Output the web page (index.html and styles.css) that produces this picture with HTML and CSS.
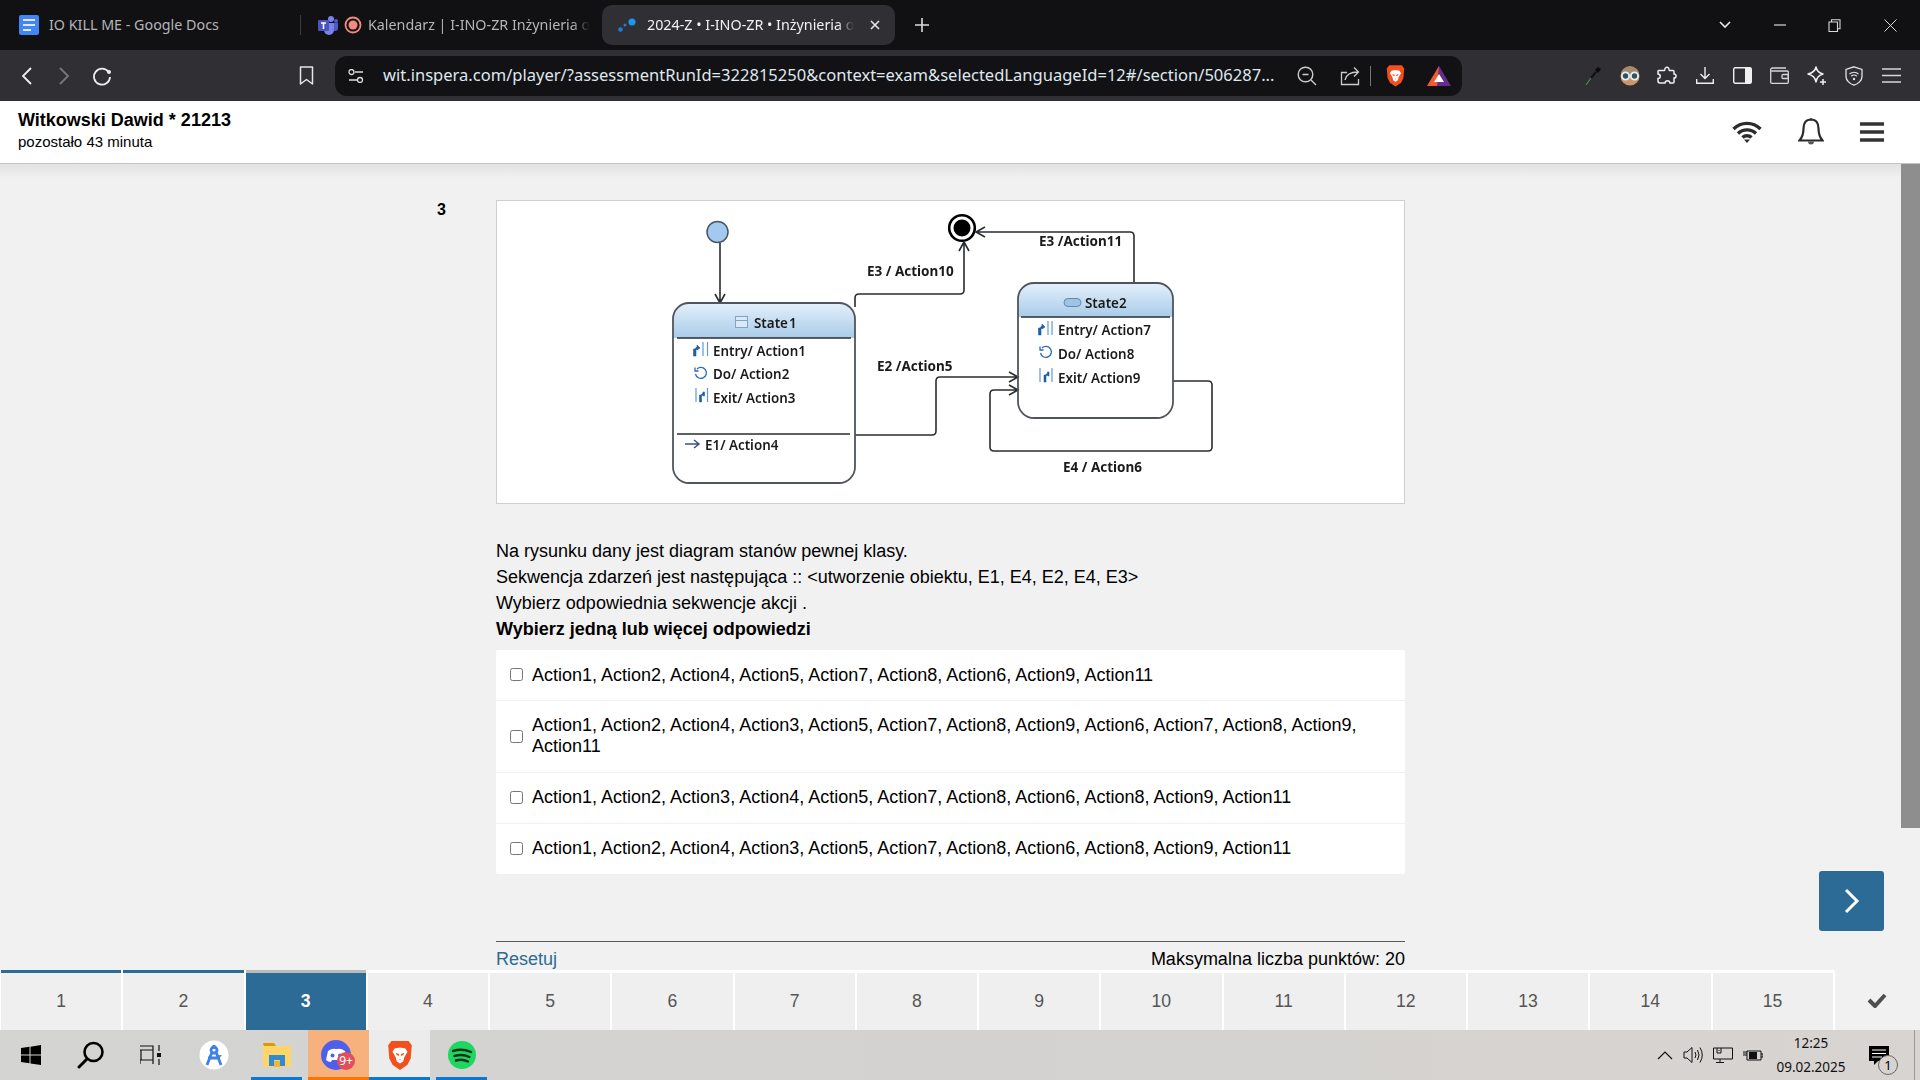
FILE: index.html
```html
<!DOCTYPE html>
<html lang="pl">

<head>
  <meta charset="UTF-8">
  <title>2024-Z • I-INO-ZR • Inżynieria</title>
  <link rel="stylesheet" href="styles.css">
</head>

<body>
  <svg class="defs" width="0" height="0">
    <symbol id="brave" viewBox="0 0 24 28">
      <path fill="#f1501f" d="M4 1h16l3 4-1 12-3 6-7 5-7-5-3-6L1 5z"/>
      <path fill="#fff" d="M7 8l5-1 5 1 2 3-3 5-1 4-3 2-3-2-1-4-3-5z"/>
      <path fill="#f1501f" d="M8 12l3 1v2l-2-1zM16 12l-3 1v2l2-1zM11 18h2l-1 1z"/>
    </symbol>
  </svg>

  <div class="tabbar">
    <div class="tab tab-docs">
      <svg class="tab-ico" width="20" height="20" viewBox="0 0 20 20"><rect width="20" height="20" rx="2" fill="#4285f4"/><path d="M4 5h12M4 10h12M4 15h8" stroke="#dbe8ff" stroke-width="2"/></svg>
      <span class="tab-title">IO KILL ME - Google Docs</span>
    </div>
    <div class="tab-sep"></div>
    <div class="tab tab-cal">
      <svg class="tab-ico" width="20" height="20" viewBox="0 0 20 20"><circle cx="13" cy="4" r="3" fill="#7b83eb"/><circle cx="18" cy="6" r="2" fill="#5059c9"/><path d="M15 8h5v6a3 3 0 0 1-5 1z" fill="#5059c9"/><path d="M6 8h10v7a5 5 0 0 1-10 0z" fill="#7b83eb"/><rect y="5" width="11" height="11" rx="1" fill="#4b53bc"/><path d="M3 8h5M5.500 8v6" stroke="#fff" stroke-width="1.500"/></svg>
      <svg class="tab-ico" width="18" height="18" viewBox="0 0 18 18"><circle cx="9" cy="9" r="7.500" fill="none" stroke="#f28b82" stroke-width="1.800"/><circle cx="9" cy="9" r="4.500" fill="#f28b82"/></svg>
      <span class="tab-title tab-fade">Kalendarz | I-INO-ZR Inżynieria o</span>
    </div>
    <div class="tab tab-active">
      <svg class="tab-ico" width="18" height="14" viewBox="0 0 18 14"><circle cx="2.500" cy="11.500" r="2.300" fill="#1c7ed6"/><circle cx="7" cy="7" r="1.500" fill="#1c7ed6"/><circle cx="14" cy="4" r="3.500" fill="#1e96f0"/></svg>
      <span class="tab-title tab-fade">2024-Z • I-INO-ZR • Inżynieria o</span>
      <svg class="tab-close" width="10" height="10" viewBox="0 0 10 10"><path d="M1 1l8 8M9 1l-8 8" stroke="#e8e8e8" stroke-width="1.600"/></svg>
    </div>
    <svg class="tab-plus" width="14" height="14" viewBox="0 0 14 14"><path d="M7 0v14M0 7h14" stroke="#dcdcdc" stroke-width="1.600"/></svg>
    <div class="win-ctrls">
      <svg width="12" height="8" viewBox="0 0 12 8"><path d="M1 1l5 5 5-5" fill="none" stroke="#e8e8e8" stroke-width="1.600"/></svg>
      <svg width="12" height="2" viewBox="0 0 12 2"><path d="M0 1h12" stroke="#d8d8d8" stroke-width="1.200"/></svg>
      <svg width="13" height="13" viewBox="0 0 13 13"><path d="M1 3h8.500v9.500H1zM3.500 3V.8H12v9h-2.500" fill="none" stroke="#d8d8d8" stroke-width="1.100"/></svg>
      <svg width="13" height="13" viewBox="0 0 13 13"><path d="M.5.500l12 12M12.500.500l-12 12" stroke="#d8d8d8" stroke-width="1"/></svg>
    </div>
  </div>

  <div class="toolbar">
    <div class="nav-btns">
      <svg width="12" height="18" viewBox="0 0 12 18"><path d="M10 1L2 9l8 8" fill="none" stroke="#eee" stroke-width="1.800"/></svg>
      <svg width="12" height="18" viewBox="0 0 12 18"><path d="M2 1l8 8-8 8" fill="none" stroke="#77777c" stroke-width="1.800"/></svg>
      <svg width="20" height="20" viewBox="0 0 20 20"><path d="M16.500 6a8 8 0 1 0 1.500 5" fill="none" stroke="#eee" stroke-width="1.800"/><circle cx="17" cy="6" r="2" fill="#eee"/></svg>
    </div>
    <svg class="bookmark" width="15" height="19" viewBox="0 0 15 19"><path d="M1.500 1h12v17l-6-4.500-6 4.500z" fill="none" stroke="#e6e6e6" stroke-width="1.500" stroke-linejoin="round"/></svg>
    <div class="urlbar">
      <svg width="16" height="14" viewBox="0 0 16 14"><circle cx="3.500" cy="3" r="2.500" fill="none" stroke="#ddd" stroke-width="1.300"/><circle cx="12" cy="11" r="2.500" fill="none" stroke="#ddd" stroke-width="1.300"/><path d="M7 3h8M1 11h8" stroke="#ddd" stroke-width="1.300"/></svg>
      <span class="url-text">wit.inspera.com/player/?assessmentRunId=322815250&amp;context=exam&amp;selectedLanguageId=12#/section/506287...</span>
      <svg class="url-zoom" width="20" height="20" viewBox="0 0 20 20"><circle cx="8.500" cy="8.500" r="7.300" fill="none" stroke="#ccc" stroke-width="1.400"/><path d="M5.500 8.500h6M14 14l5 5" stroke="#ccc" stroke-width="1.400"/></svg>
      <svg class="url-share" width="20" height="20" viewBox="0 0 20 20"><path d="M7 6.500H1.500V18.500H18.500V13M5 14c1-5 5-8 13-8M14 1.500L18.500 6 14 10.500" fill="none" stroke="#ccc" stroke-width="1.300"/></svg>
      <span class="url-sep"></span>
      <svg class="url-brave" width="19" height="23"><use href="#brave"/></svg>
      <svg class="url-bat" width="24" height="20" viewBox="0 0 24 20"><path d="M12 0l12 20H0z" fill="#662d91"/><path d="M12 0L0 20h10z" fill="#f15a29"/><path d="M12 8l5 8H7z" fill="#fff"/></svg>
    </div>
    <div class="ext-icons">
      <svg width="18" height="20" viewBox="0 0 18 20"><path d="M2 19l5-7" stroke="#3e8f55" stroke-width="1.200"/><path d="M7 12l5-6" stroke="#111" stroke-width="2"/><path d="M11 4l3-3 3 2-3 4z" fill="#0b0b0c"/></svg>
      <svg width="20" height="20" viewBox="0 0 20 20"><circle cx="10" cy="10" r="9.500" fill="#cf9468"/><path d="M1 9a9 9 0 0 1 18 0z" fill="#a68a6c"/><circle cx="5.500" cy="10" r="3.600" fill="#37505c" stroke="#dff3f5" stroke-width="1.800"/><circle cx="14.500" cy="10" r="3.600" fill="#37505c" stroke="#dff3f5" stroke-width="1.800"/></svg>
      <svg width="20" height="20" viewBox="0 0 20 20"><path d="M8 2.500c1-2 4-1.500 4 1 0 .8 0 1 .5 1H16a1 1 0 0 1 1 1V8c2.500 0 3 4 0 4v4a1 1 0 0 1-1 1h-3c-.5-3-4.500-3-5 0H3a2 2 0 0 1-2-2v-2.500c3 0 3-4.500 0-4.500V5a1 1 0 0 1 1-.5h5c.7 0 1-.7 1-2z" fill="none" stroke="#f0f0f0" stroke-width="1.500"/></svg>
      <svg width="18" height="18" viewBox="0 0 18 18"><path d="M9 0v11M4.500 7L9 11.500 13.500 7M.7 12v4.300h16.600V12" fill="none" stroke="#eee" stroke-width="1.400"/></svg>
      <svg width="19" height="17" viewBox="0 0 19 17"><rect x=".7" y=".7" width="17.600" height="15.600" rx="1.500" fill="none" stroke="#f0f0f0" stroke-width="1.400"/><rect x="12" y="1" width="6" height="15" fill="#f0f0f0"/></svg>
      <svg width="19" height="17" viewBox="0 0 19 17"><path d="M16 1H2.500A1.800 1.800 0 0 0 .7 2.800v12.400c0 .7.500 1.100 1.100 1.100h15.500c.6 0 1-.4 1-1V5c0-.7-.4-1-1-1H1.500" fill="none" stroke="#d8d8d8" stroke-width="1.300"/><rect x="12" y="7.500" width="6.300" height="4" rx="1" fill="none" stroke="#d8d8d8" stroke-width="1.300"/></svg>
      <svg width="20" height="20" viewBox="0 0 20 20"><path d="M9 1c.8 4 3 6 7 7-4 1-6.200 3-7 8-.8-5-3.500-7-8-8 4.500-1 7.200-3 8-7z" fill="none" stroke="#f0f0f0" stroke-width="1.500" stroke-linejoin="round"/><path d="M16 13v6M13 16h6" stroke="#f0f0f0" stroke-width="1.500"/></svg>
      <svg width="18" height="20" viewBox="0 0 18 20"><path d="M9 .8l8 2.700v7c0 4-4 7.500-8 8.700-4-1.200-8-4.700-8-8.700v-7z" fill="none" stroke="#e4e4e4" stroke-width="1.300"/><path d="M4.500 8a7 7 0 0 1 9 0M6.200 10.300a4 4 0 0 1 5.600 0" fill="none" stroke="#e4e4e4" stroke-width="1.200"/><circle cx="9" cy="13" r="1.200" fill="#e4e4e4"/></svg>
      <svg width="19" height="15" viewBox="0 0 19 15"><path d="M0 1h19M0 7.500h19M0 14h19" stroke="#d8d8d8" stroke-width="1.400"/></svg>
    </div>
  </div>

  <header class="exam-head">
    <div class="candidate">
      <div class="candidate-name">Witkowski Dawid * 21213</div>
      <div class="candidate-time">pozostało 43 minuta</div>
    </div>
    <div class="head-icons">
      <svg class="ico-wifi" width="30" height="22" viewBox="0 0 30 22"><path d="M1.500 8a19 19 0 0 1 27 0M6 12.500a13 13 0 0 1 18 0M10.500 16.500a6.500 6.500 0 0 1 9 0" fill="none" stroke="#2c2c2c" stroke-width="3.400"/><path d="M12 18.500h6L15 22z" fill="#2c2c2c"/></svg>
      <svg class="ico-bell" width="26" height="28" viewBox="0 0 26 28"><path d="M13 1.500c-5 0-7.500 3.500-7.500 9 0 5-1 8.500-4 12h23c-3-3.500-4-7-4-12 0-5.500-2.500-9-7.500-9z" fill="none" stroke="#2a2a2a" stroke-width="2.200"/><path d="M10 23.500a3 3 0 0 0 6 0z" fill="#555"/><circle cx="13" cy="1.500" r="1.300" fill="#333"/></svg>
      <svg class="ico-menu" width="24" height="20" viewBox="0 0 24 20"><path d="M0 2h24M0 10h24M0 18h24" stroke="#333" stroke-width="3.400"/></svg>
    </div>
  </header>

  <main class="exam-main">
    <div class="question">
      <div class="q-number">3</div>
      <div class="q-body">
        <div class="q-figure">
          <svg class="uml" width="907" height="302" viewBox="497 201 907 302">
            <defs>
              <linearGradient id="headfill" x1="0" y1="0" x2="0" y2="1">
                <stop offset="0" stop-color="#e4f0fb"/>
                <stop offset="1" stop-color="#a9cbe8"/>
              </linearGradient>
              <clipPath id="clip1"><rect x="673" y="303" width="182" height="180" rx="16"/></clipPath>
              <clipPath id="clip2"><rect x="1018" y="283" width="155" height="135" rx="16"/></clipPath>
            </defs>

            <circle cx="717.500" cy="232" r="10.500" fill="#a3c9ef" stroke="#4d5560" stroke-width="1.500"/>
            <circle cx="962" cy="228" r="12.800" fill="#fff" stroke="#000" stroke-width="2.600"/>
            <circle cx="962" cy="228" r="8.500" fill="#000"/>

            <g class="uml-line">
              <path d="M720 243v60M715 294l5 9 5-9"/>
              <path d="M855 307v-9q0-4 4-4h101q4 0 4-4v-48M959 251l5-9 5 9"/>
              <path d="M1134 283v-47q0-4-4-4h-154M985 227l-9 5 9 5"/>
              <path d="M855 435h77q4 0 4-4v-50q0-4 4-4h78M1009 372l9 5-9 5"/>
              <path d="M1173 381h35q4 0 4 4v62q0 4-4 4h-214q-4 0-4-4v-53q0-4 4-4h24M1009 385l9 5-9 5"/>
            </g>

            <g clip-path="url(#clip1)">
              <rect x="673" y="303" width="182" height="35" fill="url(#headfill)"/>
            </g>
            <g clip-path="url(#clip2)">
              <rect x="1018" y="283" width="155" height="34" fill="url(#headfill)"/>
            </g>
            <rect class="uml-state" x="673" y="303" width="182" height="180" rx="16"/>
            <rect class="uml-state" x="1018" y="283" width="155" height="135" rx="16"/>
            <path class="uml-div" d="M677 338h174M677 434h173M1021 317h149"/>

            <rect x="735.500" y="316.500" width="12" height="11" fill="#dbe9f6" stroke="#7ea5c7"/>
            <path d="M735.500 320.500h12" stroke="#7ea5c7"/>
            <rect x="1064" y="298.500" width="17" height="8" rx="4" fill="#9fc3e2" stroke="#5f8bb2"/>

            <!-- entry, do and exit markers -->
            <g class="uml-ico">
              <path class="thin" d="M703 342v14M707.500 342v14"/>
              <path class="solid" d="M693.500 356v-7h1.500l2-2.500v-1.500l3 3-3 2v-1l-1 1v6z"/>
              <path class="thin" d="M1048 321v14M1052 321v14"/>
              <path class="solid" d="M1038.500 335v-7h1.500l2-2.500v-1.500l3 3-3 2v-1l-1 1v6z"/>
              <path d="M697 369a5.500 5.500 0 1 1-1.500 5M695 367.500v3.500h3.500"/>
              <path d="M1042 348a5.500 5.500 0 1 1-1.500 5M1040 346.500v3.500h3.500"/>
              <path class="thin" d="M696 388v14M707.500 388v14"/>
              <path class="solid" d="M699.500 402v-7h1.500l2-2v-1h1.500v4h-1l-1-1-1 1v6z"/>
              <path class="thin" d="M1040 368v14M1052 368v14"/>
              <path class="solid" d="M1044 382v-7h1.500l2-2v-1h1.500v4h-1l-1-1-1 1v6z"/>
              <path class="dark" d="M685 444h14M694 440l5 4-5 4"/>
            </g>

            <g class="uml-text">
              <text x="754" y="328" word-spacing="-2.500">State 1</text>
              <text x="713" y="356">Entry/ Action1</text>
              <text x="713" y="379">Do/ Action2</text>
              <text x="713" y="403">Exit/ Action3</text>
              <text x="705" y="450">E1/ Action4</text>
              <text x="1085" y="308">State2</text>
              <text x="1058" y="335">Entry/ Action7</text>
              <text x="1058" y="359">Do/ Action8</text>
              <text x="1058" y="383">Exit/ Action9</text>
            </g>
            <g class="uml-text uml-edge">
              <text x="867" y="276">E3 / Action10</text>
              <text x="1039" y="246">E3 /Action11</text>
              <text x="877" y="371">E2 /Action5</text>
              <text x="1063" y="472">E4 / Action6</text>
            </g>
          </svg>
        </div>

        <div class="q-text">
          <p>Na rysunku dany jest diagram stanów pewnej klasy.</p>
          <p>Sekwencja zdarzeń jest następująca :: &lt;utworzenie obiektu, E1, E4, E2, E4, E3&gt;</p>
          <p>Wybierz odpowiednia sekwencje akcji .</p>
          <p class="q-hint">Wybierz jedną lub więcej odpowiedzi</p>
        </div>

        <div class="choices">
          <label class="choice"><input type="checkbox"><span>Action1, Action2, Action4, Action5, Action7, Action8, Action6, Action9, Action11</span></label>
          <label class="choice choice-tall"><input type="checkbox"><span>Action1, Action2, Action4, Action3, Action5, Action7, Action8, Action9, Action6, Action7, Action8, Action9, Action11</span></label>
          <label class="choice"><input type="checkbox"><span>Action1, Action2, Action3, Action4, Action5, Action7, Action8, Action6, Action8, Action9, Action11</span></label>
          <label class="choice"><input type="checkbox"><span>Action1, Action2, Action4, Action3, Action5, Action7, Action8, Action6, Action8, Action9, Action11</span></label>
        </div>

        <div class="q-foot">
          <a class="reset">Resetuj</a>
          <span>Maksymalna liczba punktów: 20</span>
        </div>
      </div>
    </div>

    <div class="next-btn">
      <svg width="16" height="26" viewBox="0 0 16 26"><path d="M2 2l11 11L2 24" fill="none" stroke="#fff" stroke-width="3"/></svg>
    </div>
    <div class="scroll-thumb"></div>
  </main>

  <nav class="q-nav">
    <div class="q-cell done">1</div>
    <div class="q-cell done">2</div>
    <div class="q-cell current">3</div>
    <div class="q-cell">4</div>
    <div class="q-cell">5</div>
    <div class="q-cell">6</div>
    <div class="q-cell">7</div>
    <div class="q-cell">8</div>
    <div class="q-cell">9</div>
    <div class="q-cell">10</div>
    <div class="q-cell">11</div>
    <div class="q-cell">12</div>
    <div class="q-cell">13</div>
    <div class="q-cell">14</div>
    <div class="q-cell">15</div>
    <div class="q-cell q-check">
      <svg width="20" height="16" viewBox="0 0 20 16"><path d="M2 8l6 6L18 3" fill="none" stroke="#4f4f4f" stroke-width="4"/></svg>
    </div>
  </nav>

  <footer class="taskbar">
    <div class="task-item task-win">
      <svg width="20" height="20" viewBox="0 0 20 20"><path d="M0 3l8.500-1.200V9.500H0zM9.500 1.700L20 0v9.500H9.500zM0 10.500h8.500v7.700L0 17zM9.500 10.500H20V20L9.500 18.400z"/></svg>
    </div>
    <div class="task-item task-search">
      <svg width="28" height="28" viewBox="0 0 28 28"><circle cx="16.500" cy="11" r="9" fill="none" stroke="#000" stroke-width="2.600"/><path d="M10 18l-8 8" stroke="#000" stroke-width="3" stroke-linecap="round"/></svg>
    </div>
    <div class="task-item task-view">
      <svg width="23" height="20" viewBox="0 0 23 20"><path d="M0 1h13v4H0M1 5h12v10H1zM0 19v-4h13v4M19 0v6M19 14v6" fill="none" stroke="#111" stroke-width="1.200"/><rect x="17" y="8" width="4" height="4" fill="#111"/></svg>
    </div>
    <div class="task-item task-studio">
      <svg width="30" height="30" viewBox="0 0 30 30"><circle cx="15" cy="15" r="14.500" fill="#fff"/><path d="M23 15l-3 4-3-4z" fill="#4caf7a"/><path d="M15 5v4M12 10a3 3 0 1 1 6 0 3 3 0 0 1-6 0M13 12L8 25M17 12l5 13M9 18h12" fill="none" stroke="#3f80ea" stroke-width="2.800"/></svg>
    </div>
    <div class="task-item task-files is-open">
      <svg width="28" height="24" viewBox="0 0 28 24"><path d="M0 1q0-1 1-1h10l2 3H1z" fill="#d99c00"/><path d="M0 3h27q1 0 1 1v19q0 1-1 1H1q-1 0-1-1z" fill="#ffd568"/><path d="M6 12h16v11h-5v-6h-6v6H6z" fill="#2f8bd4"/><rect x="11" y="18" width="6" height="6" fill="#f3b62e"/></svg>
    </div>
    <div class="task-item task-discord">
      <svg class="discord-ico" width="32" height="30" viewBox="0 0 32 30"><circle cx="15" cy="15" r="15" fill="#4f5fe8"/><path d="M7 11q4-3 8-2h1q4-1 8 2l2 9q-2 2-5 2l-1-2h-9l-1 2q-3 0-5-2z" fill="#fff"/><circle cx="11.500" cy="15.500" r="2" fill="#4f5fe8"/><circle cx="19" cy="15.500" r="2" fill="#4f5fe8"/></svg>
      <span class="discord-badge">9+</span>
    </div>
    <div class="task-item task-brave">
      <svg width="26" height="30"><use href="#brave"/></svg>
    </div>
    <div class="task-item task-spotify is-open">
      <svg width="28" height="28" viewBox="0 0 28 28"><circle cx="14" cy="14" r="14" fill="#1ed760"/><path d="M5 10q9-3 18 1M6.500 15q8-2.500 15 1M8 19.500q6-2 12 1" fill="none" stroke="#14301f" stroke-width="2.400" stroke-linecap="round"/></svg>
    </div>

    <div class="tray">
      <svg width="16" height="9" viewBox="0 0 16 9"><path d="M1 8l7-7 7 7" fill="none" stroke="#111" stroke-width="1.200"/></svg>
      <svg width="20" height="18" viewBox="0 0 20 18"><path d="M1 6h3l5-4.500v15L4 12H1z" fill="none" stroke="#111"/><path d="M12 6q2 3 0 6M14.500 4q3 5 0 10M17 1.500q4.500 7.500 0 15" fill="none" stroke="#111"/></svg>
      <svg width="20" height="16" viewBox="0 0 20 16"><path d="M.500 1h19v11H.500zM7 12v3M3 15.500h8M4 1v5h4V1M6 3v1" fill="none" stroke="#111"/></svg>
      <svg width="20" height="12" viewBox="0 0 20 12"><path d="M4 2h14v9H4z" fill="none" stroke="#111"/><rect x="6" y="3" width="8" height="7" fill="#111"/><path d="M18 5h2v3h-2M0 6h4M1 2v3M3 2v3" fill="none" stroke="#111"/></svg>
    </div>
    <div class="clock">
      <div>12:25</div>
      <div>09.02.2025</div>
    </div>
    <div class="notif">
      <svg width="20" height="19" viewBox="0 0 20 19"><path d="M0 0h20v15H9l-4 4v-4H0z" fill="#000"/><path d="M3 4h14M3 7.500h14M3 11h10" stroke="#fff" stroke-width="1"/></svg>
      <span class="notif-count">1</span>
    </div>
    <div class="show-desktop"></div>
  </footer>
</body>

</html>
```

FILE: styles.css
```css
* {
  padding: 0;
  margin: 0;
  box-sizing: border-box;
}

html, body {
  height: 100%;
  overflow: hidden;
}

body {
  display: flex;
  flex-direction: column;
  width: 1920px;
  height: 1080px;
  font-family: "Liberation Sans", Arial, sans-serif;
  background: #f1f1f1;
  color: #000;
}

svg {
  display: block;
  flex: none;
}

.defs {
  position: absolute;
}

/* browser chrome */
.tabbar {
  display: flex;
  align-items: center;
  flex: none;
  height: 50px;
  background: #111113;
  font-family: "Noto Sans", Roboto, sans-serif;
  font-size: 14.3px;
  color: #b6b6b8;
}

.tab {
  display: flex;
  align-items: center;
  height: 40px;
  overflow: hidden;
}

.tab-docs {
  width: 300px;
  padding-left: 19px;
  gap: 10px;
}

.tab-sep {
  width: 1px;
  height: 20px;
  background: #3c3c40;
}

.tab-cal {
  width: 282px;
  margin-left: 17px;
  gap: 6px;
}

.tab-title {
  padding-bottom: 2px;
  white-space: nowrap;
}

.tab-fade {
  -webkit-mask-image: linear-gradient(to right, #000 92%, transparent 100%);
  mask-image: linear-gradient(to right, #000 92%, transparent 100%);
}

.tab-active {
  width: 293px;
  margin-left: 2px;
  padding-left: 16px;
  gap: 11px;
  border-radius: 10px;
  background: #2f2f34;
  color: #f2f2f2;
}

.tab-close {
  margin-left: auto;
  margin-right: 15px;
}

.tab-plus {
  margin-left: 20px;
}

.win-ctrls {
  display: flex;
  align-items: center;
  justify-content: space-between;
  margin-left: auto;
  margin-right: 23px;
  width: 178px;
}

.toolbar {
  display: flex;
  align-items: center;
  flex: none;
  height: 51px;
  background: #2f2f34;
}

.nav-btns {
  display: grid;
  grid-template-columns: repeat(3, 37.5px);
  justify-items: center;
  align-items: center;
  padding-left: 8px;
  width: 299px;
}

.bookmark {
  width: 15px;
}

.urlbar {
  display: flex;
  align-items: center;
  width: 1127px;
  height: 40px;
  margin-left: 21px;
  padding-left: 13px;
  border-radius: 12px;
  background: #121214;
}

.url-text {
  margin-left: 19px;
  padding-bottom: 2px;
  width: 896px;
  font-family: "Noto Sans", Roboto, sans-serif;
  font-size: 16.55px;
  white-space: nowrap;
  color: #dfe7ef;
}

.url-zoom {
  margin-left: 18px;
}

.url-share {
  margin-left: 23px;
}

.url-sep {
  width: 1px;
  height: 20px;
  margin-left: 10px;
  background: #77777a;
}

.url-brave {
  margin-left: 15px;
}

.url-bat {
  margin-left: 22px;
}

.ext-icons {
  display: grid;
  grid-template-columns: repeat(9, 37.4px);
  justify-items: center;
  align-items: center;
  margin-left: 112px;
}

/* exam header */
.exam-head {
  display: flex;
  align-items: center;
  justify-content: space-between;
  flex: none;
  height: 63px;
  padding: 0 36px 4px 18px;
  background: #fff;
  border-bottom: 1px solid #c4c4c4;
}

.candidate-name {
  font-size: 18px;
  font-weight: 700;
  line-height: 22px;
}

.candidate-time {
  margin-top: 2px;
  font-size: 15px;
  line-height: 18px;
}

.head-icons {
  display: flex;
  align-items: center;
  margin-top: 3px;
}

.ico-bell {
  margin-left: 36px;
}

.ico-menu {
  margin-left: 36px;
}

/* question */
.exam-main {
  position: relative;
  flex: 1;
  overflow: hidden;
  padding: 36px 0 0 437px;
  background: linear-gradient(#e2e2e2, #f1f1f1 14px);
}

.question {
  display: flex;
}

.q-number {
  width: 59px;
  padding-top: 1px;
  font-size: 16px;
  font-weight: 700;
  line-height: 18px;
}

.q-body {
  width: 909px;
  font-size: 18px;
}

.q-figure {
  height: 304px;
  background: #fff;
  border: 1px solid #cfcfcf;
}

.uml {
  filter: blur(0.35px);
}

.uml-line path {
  fill: none;
  stroke: #2a2d31;
  stroke-width: 1.6;
}

.uml-state {
  fill: none;
  stroke: #50555c;
  stroke-width: 1.8;
}

.uml-div {
  stroke: #2a2e33;
  stroke-width: 1.5;
}

.uml-ico path {
  fill: none;
  stroke: #2a6ab0;
  stroke-width: 1.3;
}

.uml-ico .thin {
  stroke: #5f9ad6;
  stroke-width: 1.2;
}

.uml-ico .solid {
  fill: #1f5ea8;
  stroke: #1f5ea8;
  stroke-width: 0.6;
}

.uml-ico .dark {
  stroke: #3c4f8f;
  stroke-width: 1.5;
}

.uml-text {
  font-family: "Noto Sans", "Open Sans", sans-serif;
  font-size: 13.4px;
  font-weight: 600;
  fill: #1a1a1a;
}

.uml-edge {
  font-size: 13.5px;
  font-weight: 700;
}

.q-text {
  margin-top: 34px;
  line-height: 26px;
}

.q-hint {
  font-weight: 700;
}

.choices {
  margin-top: 8px;
  background: #fff;
  border-radius: 2px;
}

.choice {
  display: flex;
  align-items: center;
  min-height: 51px;
  padding: 0 22px 1px 14px;
  border-bottom: 1px solid #f1f1f1;
  line-height: 21px;
}

.choice:first-child span {
  padding-top: 1px;
}

.choice:last-child {
  min-height: 50px;
  border-bottom: 0;
}

.choice-tall {
  min-height: 72px;
}

.choice input {
  flex: none;
  width: 13px;
  height: 13px;
  margin: 0 9px 0 0;
}

.q-foot {
  display: flex;
  align-items: baseline;
  justify-content: space-between;
  margin-top: 67px;
  padding-top: 7px;
  border-top: 1px solid #5a5a5a;
  line-height: 21px;
}

.reset {
  color: #2b6b96;
}

.next-btn {
  position: absolute;
  top: 707px;
  right: 36px;
  display: flex;
  align-items: center;
  justify-content: center;
  width: 65px;
  height: 60px;
  border-radius: 3px;
  background: #2b6b96;
}

.scroll-thumb {
  position: absolute;
  top: 0;
  right: 0;
  width: 19px;
  height: 664px;
  background: #8e8e8e;
}

/* question navigation */
.q-nav {
  display: grid;
  grid-template-columns: repeat(15, 120.25px) 1fr;
  column-gap: 2px;
  flex: none;
  height: 60px;
  padding-left: 1px;
  background: #fff;
}

.q-cell {
  display: flex;
  align-items: center;
  justify-content: center;
  background: #efefef;
  border-top: 3px solid #fff;
  font-size: 17.6px;
  color: #555;
}

.q-cell.done {
  border-top-color: #2b6b96;
}

.q-cell.current {
  border-top-color: #bbb;
  background: #2b6b96;
  color: #fff;
  font-weight: 700;
}

.q-cell.q-check {
  padding: 0 0 3px 0;
  background: #f1f1f1;
  border-top-color: #f1f1f1;
}

/* windows taskbar */
.taskbar {
  display: flex;
  align-items: center;
  flex: none;
  height: 50px;
  background: linear-gradient(to right, #d4d4d3, #d3d2d0 50%, #d8d4d1);
}

.task-item {
  display: flex;
  align-items: center;
  justify-content: center;
  height: 50px;
}

.task-win {
  width: 61px;
}

.task-search {
  width: 60px;
}

.task-view {
  width: 61px;
}

.task-studio {
  width: 60px;
  padding-left: 4px;
}

.task-files {
  width: 51px;
  margin-left: 9px;
}

.is-open {
  border-bottom: 3px solid #0a78d4;
  padding-top: 3px;
}

.task-discord {
  position: relative;
  width: 61px;
  margin-left: 6px;
  background: #f6b17c;
  border-bottom: 3px solid #ff7300;
  padding-top: 3px;
}

.discord-ico {
  margin-right: 4px;
}

.discord-badge {
  position: absolute;
  top: 22px;
  left: 29px;
  width: 18px;
  height: 18px;
  border-radius: 9px;
  background: #e0505a;
  color: #fff;
  font-family: "Noto Sans", sans-serif;
  font-size: 12px;
  line-height: 18px;
  text-align: center;
}

.task-brave {
  width: 61px;
  background: #ececec;
  border-bottom: 3px solid #0a78d4;
  padding-top: 3px;
}

.task-spotify {
  width: 51px;
  margin-left: 6px;
}

.tray {
  display: flex;
  align-items: center;
  gap: 10px;
  margin-left: auto;
}

.clock {
  width: 86px;
  margin-left: 5px;
  font-family: "Noto Sans", "Open Sans", sans-serif;
  font-size: 13.5px;
  line-height: 24px;
  text-align: center;
  color: #111;
}

.notif {
  position: relative;
  margin-left: 15px;
  margin-right: 31px;
}

.notif-count {
  position: absolute;
  top: 9px;
  left: 9px;
  width: 20px;
  height: 20px;
  border: 1px solid #666;
  border-radius: 50%;
  background: #d6d3d0;
  font-family: "Noto Sans", sans-serif;
  font-size: 13px;
  line-height: 18px;
  text-align: center;
}

.show-desktop {
  position: absolute;
  right: 5px;
  bottom: 0;
  width: 1px;
  height: 50px;
  background: #9a9a9a;
}
```
